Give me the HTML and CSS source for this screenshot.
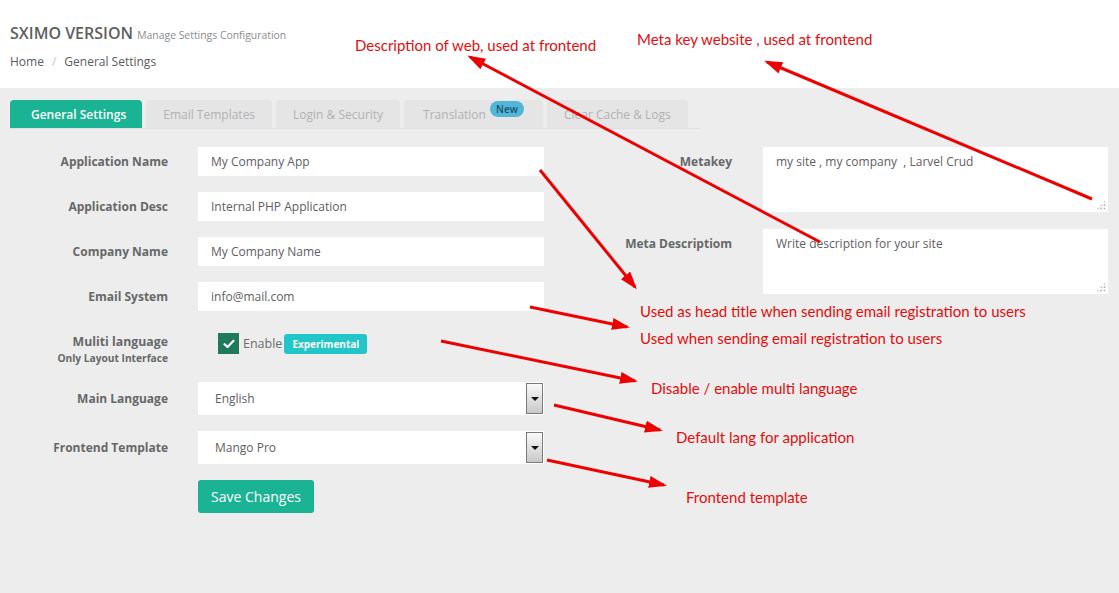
FILE: index.html
```html
<!DOCTYPE html>
<html>
<head>
<meta charset="utf-8">
<title>Settings</title>
<link rel="stylesheet" href="styles.css">
</head>
<body>
<div class="page">
  <header class="page-header">
    <h1 class="title">SXIMO VERSION <small>Manage Settings Configuration</small></h1>
    <nav class="crumbs"><span>Home</span><span class="sep">/</span><span>General Settings</span></nav>
  </header>

  <main class="content">
    <ul class="tabs">
      <li class="tab active">General Settings</li>
      <li class="tab">Email Templates</li>
      <li class="tab">Login &amp; Security</li>
      <li class="tab tab-translation">Translation <span class="badge-new">New</span></li>
      <li class="tab">Clear Cache &amp; Logs</li>
    </ul>

    <form class="settings">
      <div class="col-left">
        <div class="row">
          <label class="lbl">Application Name</label>
          <input class="field" type="text" value="My Company App">
        </div>
        <div class="row">
          <label class="lbl">Application Desc</label>
          <input class="field" type="text" value="Internal PHP Application">
        </div>
        <div class="row">
          <label class="lbl">Company Name</label>
          <input class="field" type="text" value="My Company Name">
        </div>
        <div class="row">
          <label class="lbl">Email System</label>
          <input class="field" type="text" value="info@mail.com">
        </div>
        <div class="row row-multi">
          <label class="lbl lbl-multi">Muliti language<span class="sub">Only Layout Interface</span></label>
          <div class="check-line">
            <span class="checkbox"><svg width="12" height="10" viewBox="0 0 12 10"><path d="M1.5 5.2 L4.6 8 L10.5 1.8" fill="none" stroke="#fff" stroke-width="2.2" stroke-linecap="round" stroke-linejoin="round"/></svg></span>
            <span class="enable">Enable</span>
            <span class="badge-exp">Experimental</span>
          </div>
        </div>
        <div class="row">
          <label class="lbl">Main Language</label>
          <div class="select"><span>English</span><span class="select-btn"><i></i></span></div>
        </div>
        <div class="row">
          <label class="lbl">Frontend Template</label>
          <div class="select"><span>Mango Pro</span><span class="select-btn"><i></i></span></div>
        </div>
        <div class="row row-btn">
          <span></span>
          <button type="button" class="btn-save">Save Changes</button>
        </div>
      </div>

      <div class="col-right">
        <div class="row-r">
          <label class="lbl lbl-top">Metakey</label>
          <div class="area"><textarea>my site , my company  , Larvel Crud</textarea></div>
        </div>
        <div class="row-r">
          <label class="lbl lbl-top">Meta Descriptiom</label>
          <div class="area"><textarea>Write description for your site</textarea></div>
        </div>
      </div>
    </form>
  </main>

  <div class="notes">
    <span class="note n-desc">Description of web, used at frontend</span>
    <span class="note n-meta">Meta key website , used at frontend</span>
    <span class="note n-head">Used as head title when sending email registration to users</span>
    <span class="note n-mail">Used when sending email registration to users</span>
    <span class="note n-multi">Disable / enable multi language</span>
    <span class="note n-lang">Default lang for application</span>
    <span class="note n-tpl">Frontend template</span>
  </div>

  <svg class="arrows" width="1119" height="593" viewBox="0 0 1119 593">
    <defs>
      <marker id="ah" markerUnits="userSpaceOnUse" markerWidth="18" markerHeight="12" refX="15" refY="6" orient="auto">
        <path d="M0 0 L18 6 L0 12 Z" fill="#ee0000"/>
      </marker>
    </defs>
    <g stroke="#ee0000" stroke-width="3" fill="none" marker-end="url(#ah)">
      <line x1="1092" y1="199" x2="767" y2="62"/>
      <line x1="820" y1="242" x2="470" y2="57"/>
      <line x1="540" y1="170" x2="635" y2="287"/>
      <line x1="530" y1="307" x2="627" y2="327"/>
      <line x1="441" y1="341" x2="635" y2="381"/>
      <line x1="554" y1="405" x2="660" y2="430"/>
      <line x1="547" y1="460" x2="664" y2="485"/>
    </g>
  </svg>
</div>
</body>
</html>
```

FILE: styles.css
```css
* { box-sizing: border-box; }
html, body { margin: 0; padding: 0; }
body {
  background: #ededed;
  font-family: "Open Sans", "Noto Sans", sans-serif;
  color: #676a6c;
  width: 1119px;
  height: 593px;
  overflow: hidden;
}
.page { position: relative; width: 1119px; height: 593px; }

.page-header {
  background: #fff;
  height: 88px;
  padding: 23px 10px 0;
}
.title {
  margin: 0;
  font-size: 16px;
  line-height: 21px;
  font-weight: 600;
  color: #5d5f61;
}
.title small {
  font-size: 10.4px;
  font-weight: 400;
  color: #8a8c8e;
  margin-left: 0;
}
.crumbs {
  margin-top: 7px;
  font-size: 12px;
  line-height: 17px;
  color: #5a5c5e;
}
.crumbs .sep { color: #c8c8c8; margin: 0 8px; }

.content { padding: 12px 10px 0; }

.tabs {
  list-style: none;
  margin: 0;
  padding: 0;
  display: flex;
  gap: 4px;
  height: 29px;
  border-bottom: 1px solid #e0e0e0;
  width: 690px;
}
.tab {
  height: 28px;
  padding: 0 17px;
  display: flex;
  align-items: center;
  background: #e5e5e5;
  color: #b0b2b4;
  font-size: 12px;
  border-radius: 4px 4px 0 0;
  position: relative;
}
.tab.active {
  background: #1ab394;
  color: #fff;
  font-weight: 600;
  padding: 0 16px 0 21px;
}
.tab-translation { padding-right: 57px; padding-left: 19px; }
.badge-new {
  position: absolute;
  left: 86px;
  top: 1px;
  height: 16px;
  padding: 0 6px;
  border-radius: 8px;
  background: #52b6d9;
  color: #1d4f6e;
  font-size: 10px;
  font-weight: 600;
  line-height: 16px;
}

.settings {
  display: flex;
  padding-top: 18px;
}
.col-left { width: 534px; }
.col-right { margin-left: 11px; }

.row {
  display: grid;
  grid-template-columns: 158px 346px;
  column-gap: 30px;
  align-items: center;
  margin-bottom: 16px;
}
.lbl {
  text-align: right;
  font-size: 12px;
  font-weight: 700;
  line-height: 17px;
  color: #666869;
}
.field {
  height: 29px;
  border: none;
  background: #fff;
  padding: 0 13px;
  font-family: "Open Sans", sans-serif;
  font-size: 12px;
  color: #5e6062;
  outline: none;
}

.row-multi { align-items: start; margin-top: 22px; margin-bottom: 16px; }
.lbl-multi { display: flex; flex-direction: column; align-items: flex-end; font-size: 12.3px; }
.lbl-multi .sub { font-size: 10.2px; line-height: 15px; margin-top: 1px; }
.check-line {
  display: flex;
  align-items: center;
  padding-left: 20px;
  height: 21px;
}
.checkbox {
  width: 21px;
  height: 21px;
  background: #1f7a5c;
  display: flex;
  align-items: center;
  justify-content: center;
}
.enable {
  font-size: 12.5px;
  color: #6a6c6e;
  margin-left: 4px;
  margin-right: 2px;
}
.badge-exp {
  background: #23c6c8;
  color: #fff;
  font-size: 10px;
  font-weight: 700;
  height: 20px;
  line-height: 20px;
  padding: 0 8px;
  border-radius: 3px;
}

.select {
  height: 33px;
  background: #fff;
  position: relative;
  display: flex;
  align-items: center;
  padding-left: 17px;
  font-size: 12px;
  color: #5e6062;
}
.select-btn {
  position: absolute;
  right: 1px;
  top: 1px;
  width: 17px;
  height: 31px;
  border: 1px solid #7a7a7a;
  background: linear-gradient(#fafafa, #c9c9c9);
  display: flex;
  align-items: center;
  justify-content: center;
}
.select-btn i {
  width: 0; height: 0;
  border-left: 4px solid transparent;
  border-right: 4px solid transparent;
  border-top: 4px solid #111;
}

.btn-save {
  width: 116px;
  height: 33px;
  border: none;
  border-radius: 3px;
  background: #1ab394;
  color: #fff;
  font-family: "Open Sans", sans-serif;
  font-size: 14px;
  padding: 0;
}

.row-r {
  display: grid;
  grid-template-columns: 177px 345px;
  column-gap: 31px;
  margin-bottom: 17px;
}
.lbl-top { padding-top: 6px; }
.area {
  position: relative;
  height: 65px;
  background: #fff;
}
.area textarea {
  width: 100%;
  height: 100%;
  border: none;
  resize: none;
  padding: 6px 13px;
  font-family: "Open Sans", sans-serif;
  font-size: 12px;
  line-height: 17px;
  color: #5e6062;
  background: transparent;
  outline: none;
}
.area::after {
  content: "";
  position: absolute;
  right: 2px;
  bottom: 2px;
  width: 10px;
  height: 10px;
  background: radial-gradient(circle, #b4b4b4 1px, transparent 1.3px) 0 0 / 3.4px 3.4px;
  clip-path: polygon(100% 0, 100% 100%, 0 100%);
}

.notes {
  position: absolute;
  left: 0; top: 0;
  width: 1119px; height: 593px;
  pointer-events: none;
}
.note {
  position: absolute;
  white-space: nowrap;
  font-family: Lato, "Liberation Sans", sans-serif;
  font-size: 15px;
  line-height: 18px;
  color: #e30e0e;
}
.n-desc { left: 355px; top: 36px; }
.n-meta { left: 637px; top: 30px; }
.n-head { left: 640px; top: 302px; }
.n-mail { left: 640px; top: 329px; }
.n-multi { left: 651px; top: 379px; }
.n-lang { left: 676px; top: 428px; }
.n-tpl { left: 686px; top: 488px; }

.arrows {
  position: absolute;
  left: 0; top: 0;
  pointer-events: none;
}
```
